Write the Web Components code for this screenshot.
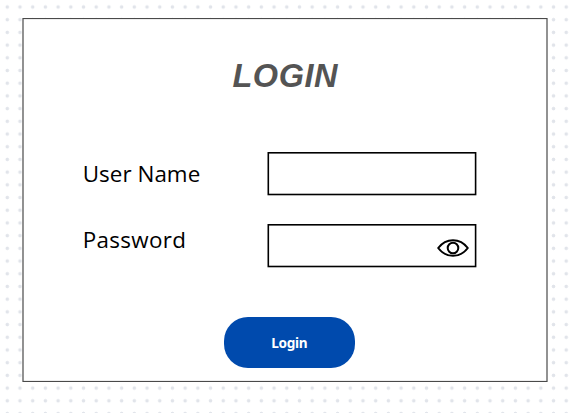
<!DOCTYPE html>
<html lang="en"><head><meta charset="utf-8"><title>Login</title>
<style>html,body{margin:0;height:100%;overflow:hidden;background:#fff}</style></head><body>
<login-page></login-page>
<script>
const define=(name,html)=>customElements.define(name,class extends HTMLElement{
  constructor(){super();this.attachShadow({mode:'open'}).innerHTML=html;}
});
define('dot-canvas',`<style>:host{display:block;box-sizing:border-box;width:569px;height:413px;padding:18px 21px 31px 22px;
background:radial-gradient(circle at center,#e1e4ea 1.3px,#e4e7ec 1.5px,transparent 2.2px) .95px .65px/12.71px 12.71px #fff}</style><slot></slot>`);
define('login-card',`<style>:host{display:grid;grid-template:100%/100%;width:526px;height:364px}
svg,.body{grid-area:1/1}svg{display:block}.body{display:flex;flex-direction:column;align-items:flex-start}</style>
<svg width="526" height="364"><rect x="1" y=".5" width="524" height="363" fill="#fff" stroke="#4a4a4a" stroke-width="1.2"/></svg><div class="body"><slot></slot></div>`);
define('card-title',`<style>:host{display:block;height:134px;box-sizing:border-box;padding:38px 0 0 210.5px;font:italic 700 32.5px/40px "Liberation Sans",sans-serif;color:#545454}
span{display:block;white-space:nowrap;letter-spacing:.5px}</style><span><slot></slot></span>`);
define('field-row',`<style>:host{display:flex;height:44px;margin-bottom:28px}
.label{box-sizing:border-box;width:245px;height:44px;padding-left:60.7px;font:390 22.4px/44px "Open Sans",sans-serif;letter-spacing:.05px;color:#000;white-space:nowrap}
:host([raised]) .label{line-height:32px;letter-spacing:.35px}</style><div class="label"><slot name="label"></slot></div><slot></slot>`);
define('text-box',`<style>:host{display:grid;width:210px;height:44px}svg,.in{grid-area:1/1}svg{display:block}
.in{display:flex;align-items:center;justify-content:flex-end;padding:4px 8px 0 0}</style>
<svg width="210" height="44"><rect x="1.3" y=".8" width="207.3" height="41.7" fill="#fff" stroke="#000" stroke-width="1.6"/></svg><div class="in"><slot></slot></div>`);
define('eye-icon',`<style>:host{display:block;width:32px;height:18px}svg{display:block}</style>
<svg width="32" height="18" fill="none" stroke="#000" stroke-width="2" stroke-linejoin="round"><path d="M1.2 9C5 4 10 1.2 16 1.2S27 4 30.8 9C27 14 22 16.8 16 16.8S5 14 1.2 9Z"/><circle cx="16" cy="9" r="5.3"/></svg>`);
define('pill-button',`<style>:host{display:block;margin:21px 0 0 201.5px}
button{display:block;width:131.6px;height:51px;border:0;border-radius:24px;padding:0;background:#004aad;color:#fff;font:700 13.6px/51px "Noto Sans",sans-serif;letter-spacing:-.3px}</style><button><slot></slot></button>`);
define('login-page',`<style>:host{display:block}</style>
<dot-canvas><login-card>
<card-title>LOGIN</card-title>
<field-row><span slot="label">User Name</span><text-box></text-box></field-row>
<field-row raised><span slot="label">Password</span><text-box><eye-icon></eye-icon></text-box></field-row>
<pill-button>Login</pill-button>
</login-card></dot-canvas>`);
</script></body></html>
